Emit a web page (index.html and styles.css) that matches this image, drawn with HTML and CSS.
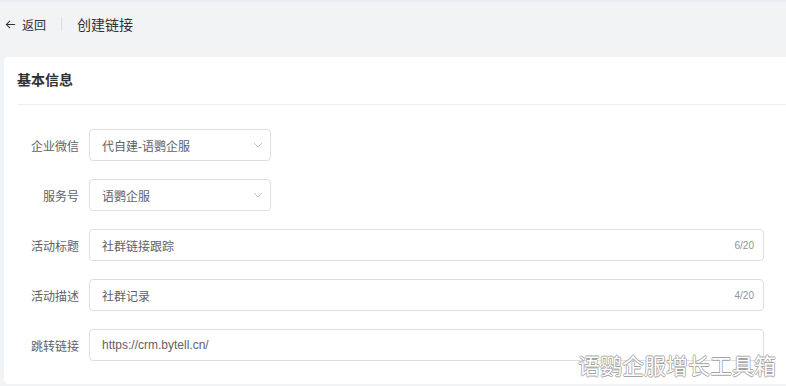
FILE: index.html
```html
<!DOCTYPE html>
<html lang="zh-CN">
<head>
    <meta charset="UTF-8">
    <meta name="viewport" content="width=device-width, initial-scale=1.0">
    <title>创建链接</title>
    <link rel="stylesheet" href="styles.css">
</head>
<body>
    <!-- Top bar -->
    <header class="topbar">
        <a class="back" href="#">
            <svg class="back-icon" viewBox="0 0 12 12" width="11" height="11">
                <path d="M11 6H1.5M5.5 2L1.5 6l4 4" fill="none" stroke="#303133" stroke-width="1.1"/>
            </svg>
            <span>返回</span>
        </a>
        <span class="bar-sep"></span>
        <span class="page-title">创建链接</span>
    </header>

    <!-- Basic info card -->
    <section class="card">
        <div class="card-head">基本信息</div>

        <form class="form">
            <div class="form-row">
                <label class="form-label">企业微信</label>
                <div class="select">
                    <span>代自建-语鹦企服</span>
                    <svg class="chevron" viewBox="0 0 10 6" width="10" height="6">
                        <path d="M1 1l4 4 4-4" fill="none" stroke="#c0c4cc" stroke-width="1"/>
                    </svg>
                </div>
            </div>

            <div class="form-row">
                <label class="form-label">服务号</label>
                <div class="select">
                    <span>语鹦企服</span>
                    <svg class="chevron" viewBox="0 0 10 6" width="10" height="6">
                        <path d="M1 1l4 4 4-4" fill="none" stroke="#c0c4cc" stroke-width="1"/>
                    </svg>
                </div>
            </div>

            <div class="form-row">
                <label class="form-label">活动标题</label>
                <div class="input">
                    <span>社群链接跟踪</span>
                    <span class="count">6/20</span>
                </div>
            </div>

            <div class="form-row">
                <label class="form-label">活动描述</label>
                <div class="input">
                    <span>社群记录</span>
                    <span class="count">4/20</span>
                </div>
            </div>

            <div class="form-row">
                <label class="form-label">跳转链接</label>
                <div class="input">
                    <span>https://crm.bytell.cn/</span>
                </div>
            </div>
        </form>
    </section>

    <div class="watermark">语鹦企服增长工具箱</div>
</body>
</html>
```

FILE: styles.css
```css
/* Page base */
body {
    margin: 0;
    padding: 0;
    background-color: #f2f3f5;
    font-family: "Liberation Sans", "Noto Sans CJK SC", sans-serif;
    color: #303133;
    overflow: hidden;
    height: 386px;
    position: relative;
}

/* Top bar */
.topbar {
    height: 48px;
    display: flex;
    align-items: center;
    padding-left: 5px;
    background: linear-gradient(#e3e9f3 0, #f2f3f5 3px);
}

.back {
    display: flex;
    align-items: center;
    gap: 6px;
    color: #303133;
    text-decoration: none;
    font-size: 12px;
}

.back-icon {
    display: block;
}

.bar-sep {
    width: 1px;
    height: 14px;
    background-color: #dcdfe6;
    margin: 0 15px;
}

.page-title {
    font-size: 14px;
    color: #303133;
}

/* Card */
.card {
    background-color: #fff;
    margin: 9px -20px 0 4px;
    border-radius: 4px;
    padding: 0 0 23px;
}

.card-head {
    margin-left: 13px;
    height: 47px;
    line-height: 47px;
    font-size: 14px;
    font-weight: bold;
    color: #303133;
    border-bottom: 1px solid #ebeef5;
}

.form {
    padding-top: 24px;
    padding-left: 13px;
}

.form-row {
    display: flex;
    align-items: center;
    margin-bottom: 18px;
}

.form-row:last-child {
    margin-bottom: 0;
}

.form-label {
    width: 62px;
    padding-right: 10px;
    text-align: right;
    font-size: 12px;
    color: #606266;
}

.select,
.input {
    height: 32px;
    box-sizing: border-box;
    border: 1px solid #dcdfe6;
    border-radius: 4px;
    display: flex;
    align-items: center;
    justify-content: space-between;
    padding: 0 9px 0 12px;
    font-size: 12px;
    color: #606266;
}

.select {
    width: 182px;
    padding-right: 7px;
}

.input {
    width: 675px;
}

.chevron {
    display: block;
}

.count {
    font-size: 10px;
    color: #909399;
}

/* Watermark over the page */
.watermark {
    position: absolute;
    right: 10px;
    bottom: 6px;
    font-size: 22px;
    color: #fff;
    text-shadow: 0.7px 0 0 #a3a3a3, -0.7px 0 0 #a3a3a3, 0 0.7px 0 #a3a3a3, 0 -0.7px 0 #a3a3a3;
}
```
